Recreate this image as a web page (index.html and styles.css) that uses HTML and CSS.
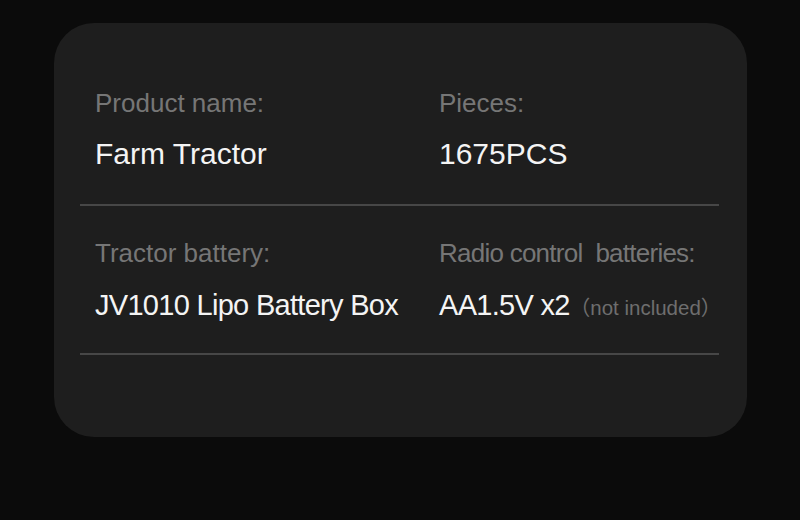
FILE: index.html
```
<!DOCTYPE html>
<html lang="en">
<head>
<meta charset="utf-8">
<title>Specs</title>
<link rel="stylesheet" href="styles.css">
</head>
<body>
<div class="card">
  <div class="row row--first">
    <div class="cell">
      <div class="label">Product name:</div>
      <div class="value">Farm Tractor</div>
    </div>
    <div class="cell">
      <div class="label">Pieces:</div>
      <div class="value">1675PCS</div>
    </div>
  </div>
  <div class="row row--second">
    <div class="cell">
      <div class="label">Tractor battery:</div>
      <div class="value">JV1010 Lipo Battery Box</div>
    </div>
    <div class="cell">
      <div class="label label--tight">Radio control&nbsp; batteries:</div>
      <div class="value">AA1.5V x2<span class="note">（not included）</span></div>
    </div>
  </div>
</div>
</body>
</html>
```
FILE: styles.css
```
html, body {
  margin: 0;
  padding: 0;
  background: #0b0b0b;
}
body {
  width: 800px;
  height: 520px;
  overflow: hidden;
  font-family: "Liberation Sans", Arial, "Noto Sans CJK SC", sans-serif;
}
.card {
  box-sizing: border-box;
  margin: 23px 0 0 54px;
  width: 693px;
  height: 414px;
  border-radius: 40px;
  background: #1e1e1e;
  padding: 33px 28px 0 26px;
}
.row {
  display: grid;
  grid-template-columns: 344px 1fr;
  padding: 32px 0 28px 15px;
  border-bottom: 2px solid #474747;
}
.label {
  font-size: 26px;
  line-height: 30px;
  color: #767676;
  white-space: nowrap;
}
.label--tight {
  letter-spacing: -0.75px;
}
.value {
  margin-top: 20px;
  line-height: 34px;
  color: #f4f4f4;
  white-space: nowrap;
}
.row--first {
  padding-bottom: 33px;
}
.row--first .value {
  margin-top: 19px;
  font-size: 30px;
}
.row--second .value {
  font-size: 29px;
  letter-spacing: -0.7px;
}
.note {
  font-size: 20.5px;
  letter-spacing: 0;
  color: #6e6e6e;
  font-family: "Liberation Sans", "Noto Sans CJK SC", sans-serif;
}
```
